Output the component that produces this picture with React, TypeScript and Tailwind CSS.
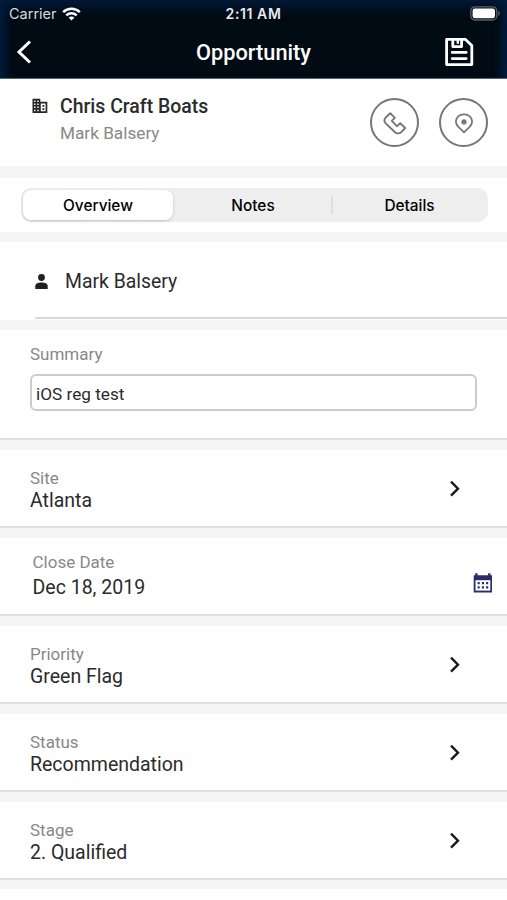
import type { ReactNode } from "react";

function WifiIcon() {
  return (
    <svg width="19" height="14" viewBox="0 0 19 14" fill="none" stroke="#fff" strokeWidth="2.5">
      <path d="M1.2 5.1 C5.8 0.7 13.2 0.7 17.8 5.1" />
      <path d="M4.3 8.3 C7.3 5.5 11.7 5.5 14.7 8.3" />
      <path d="M6.6 10.6 C8.2 9.1 10.8 9.1 12.4 10.6 L9.5 13.5 Z" fill="#fff" stroke="none" />
    </svg>
  );
}

function BatteryIcon() {
  return (
    <svg width="31" height="15" viewBox="0 0 31 15">
      <rect x="0.8" y="0.8" width="26" height="13.2" rx="4" fill="none" stroke="#5b6067" strokeWidth="1.3" />
      <rect x="2.6" y="2.6" width="22.4" height="9.6" rx="2.2" fill="#fff" />
      <path d="M28.3 5 C30.3 5.6 30.3 9.2 28.3 9.8 Z" fill="#5b6067" />
    </svg>
  );
}

function SaveIcon() {
  return (
    <svg width="30" height="30" viewBox="0 0 30 30" fill="none" stroke="#fff" strokeWidth="2.8" strokeLinejoin="round">
      <path d="M2.6 2.4 H21.5 L27.8 8.4 V27.6 H2.6 Z" />
      <path d="M8.8 2.4 V9.6 H17.6 V2.4" />
      <path d="M13.8 3 V6.8" strokeWidth="2.4" />
      <path d="M8.2 15.4 H22.2 M8.2 21.6 H22.2" strokeLinecap="round" />
    </svg>
  );
}

function BuildingIcon() {
  return (
    <svg width="16" height="16" viewBox="0 0 16 16">
      <path d="M0.5 0.8 H8.3 V3.8 H15.3 V15 H0.5 Z" fill="#262626" />
      <path
        d="M2.1 2.5h1.4v1.4H2.1z M5.3 2.5h1.4v1.4H5.3z M2.1 5.5h1.4v1.4H2.1z M5.3 5.5h1.4v1.4H5.3z M2.1 8.6h1.4v1.4H2.1z M5.3 8.6h1.4v1.4H5.3z M2.1 11.8h1.4v1.4H2.1z M5.3 11.8h1.4v1.4H5.3z M8.8 5.5h4.8v7.8H8.8z"
        fill="#fff"
      />
      <path d="M10.4 7h1.9v1.8h-1.9z M10.4 10.2h1.9v1.8h-1.9z" fill="#262626" />
    </svg>
  );
}

function PhoneIcon() {
  return (
    <svg width="24" height="24" viewBox="0 0 24 24" fill="none" stroke="#777" strokeWidth="1.9" strokeLinejoin="round">
      <path d="M7.2 2.2 L3 6.2 C1 8.2 1.2 10.8 3 12.6 L11.5 20.8 C13.5 22.9 16.5 23 18.5 20.8 L22.2 17 L17.2 12.3 L13.9 15.2 L8.8 9.8 L11.8 6.8 Z" />
    </svg>
  );
}

function PinIcon() {
  return (
    <svg width="20" height="22" viewBox="0 0 20 22">
      <path d="M10 20.4 L4.4 14.9 C-0.7 9.6 3 2.4 10 2.4 C17 2.4 20.7 9.6 15.6 14.9 Z" fill="none" stroke="#777" strokeWidth="1.8" strokeLinejoin="round" />
      <circle cx="10" cy="9.9" r="2.6" fill="#777" />
    </svg>
  );
}

function PersonIcon() {
  return (
    <svg width="13" height="15" viewBox="0 0 13 15" fill="#202020">
      <circle cx="6.5" cy="3.5" r="3.4" />
      <path d="M0.3 15 V12.2 C0.3 9.2 3 8.4 6.5 8.4 C10 8.4 12.7 9.2 12.7 12.2 V15 Z" />
    </svg>
  );
}

function CalendarIcon() {
  return (
    <svg width="20" height="20" viewBox="0 0 20 20">
      <path d="M2.2 0.3h2.4v2h10.5v-2h2.4v2H19v17.2H0.7V2.3h1.5z" fill="#2c2c68" />
      <path d="M2.5 7.2h14.8v10.4H2.5z" fill="#fff" />
      <path
        d="M4.6 9h2.1v2.2H4.6z M8.9 9h2.1v2.2H8.9z M13.1 9h2.1v2.2H13.1z M4.6 13.3h2.1v2.2H4.6z M8.9 13.3h2.1v2.2H8.9z M13.1 13.3h2.1v2.2H13.1z"
        fill="#2c2c68"
      />
    </svg>
  );
}

function Chevron() {
  return (
    <svg width="12" height="18" viewBox="0 0 12 18" fill="none" stroke="#1c1c1c" strokeWidth="2.4">
      <path d="M2 1.7 L9 8.7 L2 15.7" />
    </svg>
  );
}

function RoundButton({ label, children }: { label: string; children: ReactNode }) {
  return (
    <button aria-label={label} className="flex size-[49px] items-center justify-center rounded-full border-2 border-[#777]">
      {children}
    </button>
  );
}

function PickerRow({ label, value }: { label: string; value: string }) {
  return (
    <section className="flex h-[88px] shrink-0 items-start justify-between border-t-[10px] border-b-2 border-t-[#f5f5f5] border-b-[#e0e0e0] pr-[46px] pl-[30px]">
      <div className="pt-[17px]">
        <div className="text-[17px] leading-[22px] text-[#888]">{label}</div>
        <div className="pt-px text-[19.5px] leading-[22px]">{value}</div>
      </div>
      <div className="pt-[30px]">
        <Chevron />
      </div>
    </section>
  );
}

export default function App() {
  return (
    <main className="flex h-[900px] w-[507px] flex-col overflow-hidden bg-white font-['Roboto',sans-serif] text-[#2b2b2b]">
      <header className="h-[79px] shrink-0 border-b border-[#56616a] bg-[#000b14] text-white shadow-[inset_0_8px_14px_-3px_#001d40,inset_10px_0_10px_-5px_#001d40,inset_-10px_0_10px_-5px_#001d40]">
        <div className="grid h-[27px] grid-cols-[1fr_auto_1fr] items-center pr-[6px] pl-[9px] font-['Inter',sans-serif]">
          <div className="flex items-center gap-[5px] text-[14.5px] text-[#d5d8db]">
            <span>Carrier</span>
            <WifiIcon />
          </div>
          <div className="-ml-[3px] text-center text-[14px] font-semibold tracking-[0.6px] text-[#e8eaec]">2:11 AM</div>
          <div className="flex justify-end">
            <BatteryIcon />
          </div>
        </div>
        <div className="grid h-[50px] grid-cols-[1fr_auto_1fr] items-center pr-[33px] pl-[16px]">
          <svg width="16" height="24" viewBox="0 0 16 24" fill="none" stroke="#fff" strokeWidth="3">
            <path d="M14 1.5 L3 12 L14 22.5" />
          </svg>
          <h1 className="pt-[2px] pl-[17px] text-[21.75px] font-medium">Opportunity</h1>
          <div className="flex justify-end">
            <SaveIcon />
          </div>
        </div>
      </header>

      <section className="flex h-[87px] shrink-0 items-start pt-[19px] pr-[19px] pl-[32px]">
        <BuildingIcon />
        <div className="-mt-[4px] flex-1 pl-[12px]">
          <div className="text-[19.45px] leading-[26px] font-medium">Chris Craft Boats</div>
          <div className="pt-px text-[17.2px] leading-[25px] text-[#888]">Mark Balsery</div>
        </div>
        <div className="flex gap-[20px]">
          <RoundButton label="Call"><PhoneIcon /></RoundButton>
          <RoundButton label="Map"><PinIcon /></RoundButton>
        </div>
      </section>

      <nav className="h-[76px] shrink-0 border-t-12 border-b-10 border-[#f5f5f5] pt-[10px] pr-[19px] pl-[21px]">
        <div className="flex h-[34px] items-center rounded-[10px] bg-[#eee] p-[2px] font-['Inter',sans-serif] text-[15.4px] font-medium text-black">
          <div className="flex h-[30px] w-[150px] items-center justify-center rounded-[8px] bg-white pt-[2px] shadow-[0_1px_3px_rgba(0,0,0,0.2)]">Overview</div>
          <div className="flex h-[18px] w-[160px] items-center justify-center border-r-2 border-[#dfdfdf] pt-[2px] pl-[2px]">Notes</div>
          <div className="flex flex-1 items-center justify-center pt-[2px]">Details</div>
        </div>
      </nav>

      <section className="h-[78px] shrink-0 pl-[35px]">
        <div className="flex h-[77px] items-center border-b-2 border-[#d9d9d9] pt-[3px]">
          <PersonIcon />
          <span className="pt-[2px] pl-[17px] text-[19.4px]">Mark Balsery</span>
        </div>
      </section>

      <section className="h-[120px] shrink-0 border-t-10 border-b-2 border-t-[#f5f5f5] border-b-[#e0e0e0] px-[30px] pt-[13px]">
        <div className="text-[17px] leading-[22px] text-[#888]">Summary</div>
        <div className="mt-[9px] flex h-[37px] items-center rounded-[6px] border-2 border-[#ccc] pt-[4px] pl-[4px] text-[17.2px]">iOS reg test</div>
      </section>

      <PickerRow label="Site" value="Atlanta" />

      <section className="flex h-[88px] shrink-0 items-start justify-between border-t-[10px] border-b-2 border-t-[#f5f5f5] border-b-[#e0e0e0] pr-[14px] pl-[32.5px]">
        <div className="pt-[13px]">
          <div className="text-[17px] leading-[22px] text-[#888]">Close Date</div>
          <div className="pt-[4px] text-[19.5px] leading-[22px]">Dec 18, 2019</div>
        </div>
        <div className="pt-[35px]">
          <CalendarIcon />
        </div>
      </section>

      <PickerRow label="Priority" value="Green Flag" />
      <PickerRow label="Status" value="Recommendation" />
      <PickerRow label="Stage" value="2. Qualified" />
      <div className="h-[9px] shrink-0 bg-[#f5f5f5]" />
    </main>
  );
}
